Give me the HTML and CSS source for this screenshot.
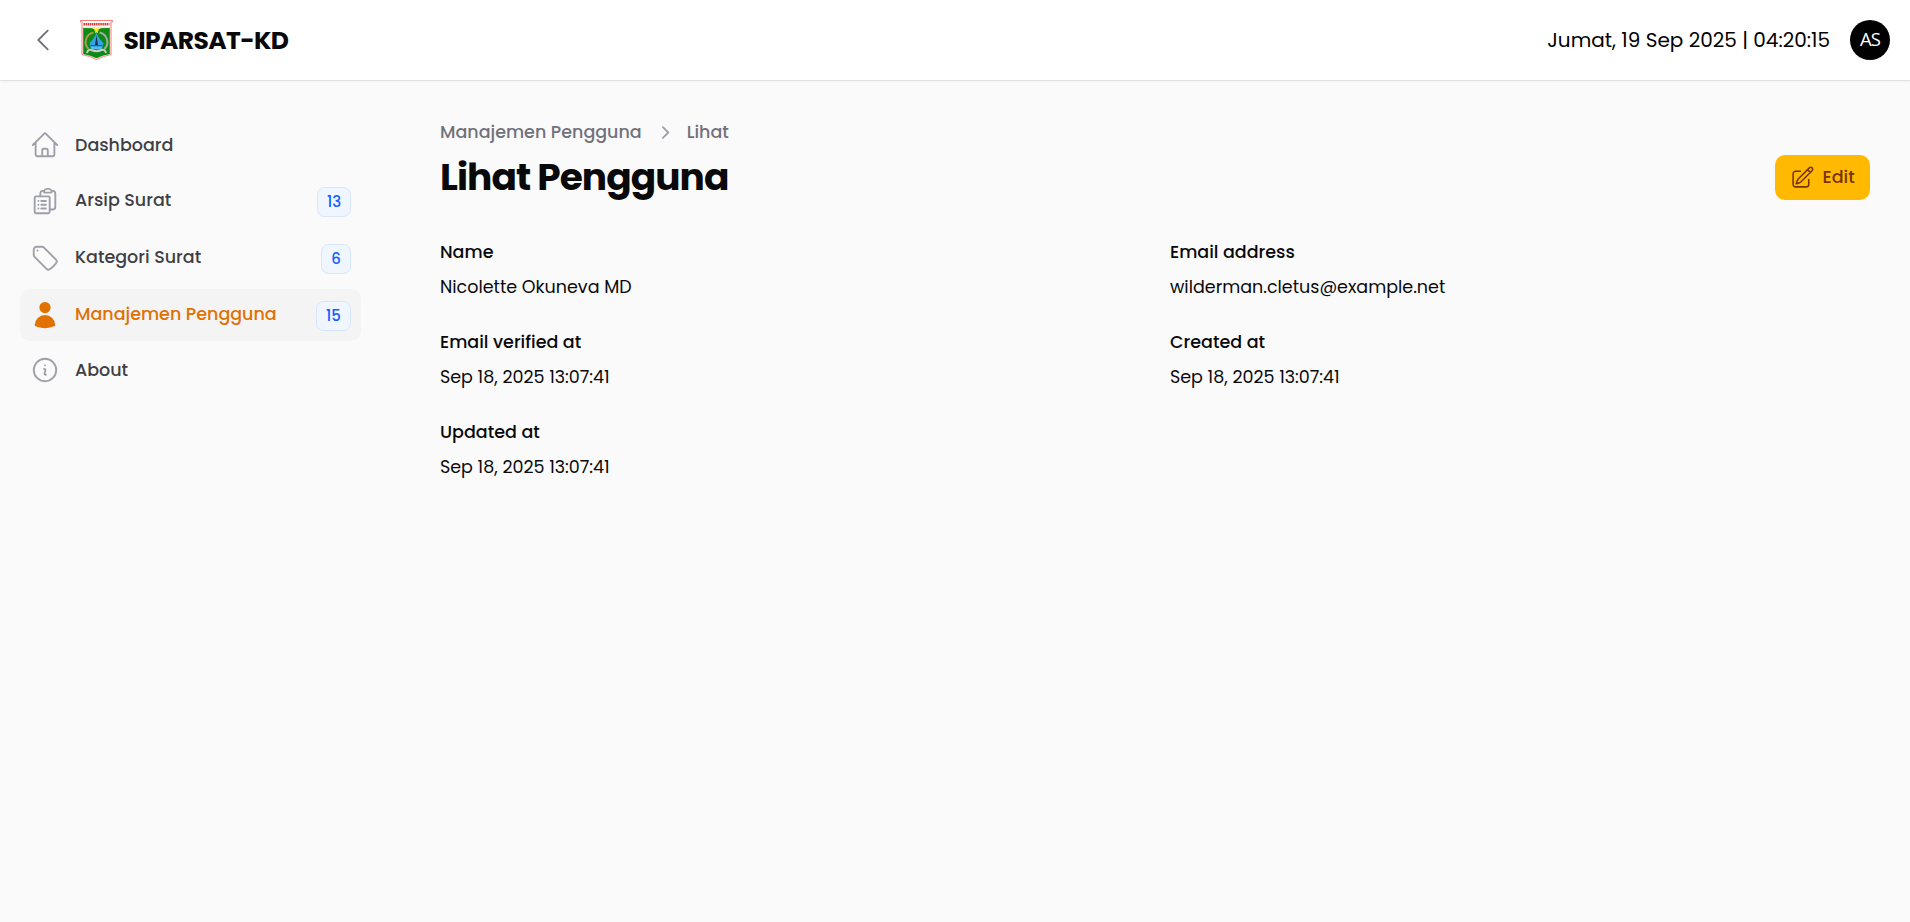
FILE: index.html
```html
<!DOCTYPE html>
<html lang="id">
<head>
<meta charset="utf-8">
<title>Lihat Pengguna - SIPARSAT-KD</title>
<link rel="stylesheet" href="styles.css">
</head>
<body>
<header class="topbar">
  <button class="collapse" aria-label="Tutup menu"><svg class="icon" viewBox="0 0 24 24"><path d="M15.750 19.500 8.250 12l7.500-7.500"/></svg></button>
  <svg class="logo" viewBox="0 0 33 40">
    <path d="M.5.5h32v1.500H31v32.500q-8 1.500-14.500 5-6.500-3.500-14.500-5V2H.5z" fill="#fff" stroke="#f47a74"/>
    <path d="M3.200 7.500h26.600v26.500q-7.500 1.200-13.300 4.300Q10.500 35.200 3.200 34z" fill="#0b8a16"/>
    <path d="M3.200 7h26.600v1l-9 .3-4.300 2.400-4.300-2.400-9-.3z" fill="#ffef7a"/>
    <path d="M3.500 4.200h26" stroke="#e8312b" stroke-width="2.600" stroke-dasharray="1.500 .6" fill="none"/>
    <path d="M13.500 12.500a9.800 9.800 0 0 0-5 16.500" fill="none" stroke="#a89c4a" stroke-width="2"/>
    <path d="M19.500 12.500a9.800 9.800 0 0 1 5 16.500" fill="none" stroke="#a9a9a0" stroke-width="2"/>
    <path d="M16.500 12q-1.500 6-6.800 11 0 4.500 3 6.500h7.600q3-2 3-6.500-5.300-5-6.800-11z" fill="#35a3e4"/>
    <path d="m16.500 15-1.500 10h3z" fill="#17354f"/>
    <path d="M10.500 25.500h12" stroke="#1c5f9c" stroke-width="1"/>
    <path d="M11 28h11" stroke="#9bd6f5" stroke-width=".8"/>
    <path d="M7 33q1-4 4.500-3 5 2.300 10 0 3.500-1 4.500 3" fill="none" stroke="#c9cfc9" stroke-width="2"/>
    <path d="m16.500 8.500.7 1.700h1.900l-1.500 1.200.6 1.900-1.700-1.100-1.700 1.100.6-1.900-1.500-1.200h1.900z" fill="#fff200"/>
  </svg>
  <span class="brand">SIPARSAT-KD</span>
  <span class="clock">Jumat, 19 Sep 2025 | 04:20:15</span>
  <span class="avatar">AS</span>
</header>
<div class="layout">
  <nav class="sidebar">
    <a class="item"><svg class="icon" viewBox="0 0 24 24"><path d="m2.250 12 8.954-8.955c.44-.439 1.152-.439 1.591 0L21.750 12M4.500 9.750v10.125c0 .621.504 1.125 1.125 1.125H9.750v-4.875c0-.621.504-1.125 1.125-1.125h2.250c.621 0 1.125.504 1.125 1.125V21h4.125c.621 0 1.125-.504 1.125-1.125V9.750M8.250 21h8.250"/></svg><span class="label">Dashboard</span></a>
    <a class="item badged"><svg class="icon" viewBox="0 0 24 24"><path d="M9 12h3.750M9 15h3.750M9 18h3.750m3 .75H18a2.250 2.250 0 0 0 2.250-2.250V6.108c0-1.135-.845-2.098-1.976-2.192a48.424 48.424 0 0 0-1.123-.08m-5.801 0c-.065.21-.1.433-.1.664 0 .414.336.75.75.75h4.500a.75.75 0 0 0 .75-.75 2.250 2.250 0 0 0-.1-.664m-5.800 0A2.251 2.251 0 0 1 13.500 2.250H15c1.012 0 1.867.668 2.150 1.586m-5.800 0c-.376.023-.75.05-1.124.08C9.095 4.010 8.250 4.973 8.250 6.108V8.250m0 0H4.875c-.621 0-1.125.504-1.125 1.125v11.250c0 .621.504 1.125 1.125 1.125h9.750c.621 0 1.125-.504 1.125-1.125V9.375c0-.621-.504-1.125-1.125-1.125H8.250ZM6.750 12h.008v.008H6.750V12Zm0 3h.008v.008H6.750V15Zm0 3h.008v.008H6.750V18Z"/></svg><span class="label">Arsip Surat</span><span class="badge b-arsip">13</span></a>
    <a class="item badged"><svg class="icon" viewBox="0 0 24 24"><path d="M9.568 3H5.250A2.250 2.250 0 0 0 3 5.250v4.318c0 .597.237 1.170.659 1.591l9.581 9.581c.699.699 1.780.872 2.607.33a18.095 18.095 0 0 0 5.223-5.223c.542-.827.369-1.908-.33-2.607L11.160 3.660A2.250 2.250 0 0 0 9.568 3ZM6 6h.008v.008H6V6Z"/></svg><span class="label">Kategori Surat</span><span class="badge b-kategori">6</span></a>
    <a class="item badged active"><svg class="icon solid" viewBox="0 0 24 24"><path d="M7.500 6a4.500 4.500 0 1 1 9 0 4.500 4.500 0 0 1-9 0ZM3.751 20.105a8.250 8.250 0 0 1 16.498 0 .75.75 0 0 1-.437.695A18.683 18.683 0 0 1 12 22.500c-2.786 0-5.433-.608-7.812-1.700a.75.75 0 0 1-.437-.695Z"/></svg><span class="label">Manajemen Pengguna</span><span class="badge b-pengguna">15</span></a>
    <a class="item"><svg class="icon" viewBox="0 0 24 24"><path d="m11.250 11.250.041-.02a.75.75 0 0 1 1.063.852l-.708 2.836a.75.75 0 0 0 1.063.853l.041-.021M21 12a9 9 0 1 1-18 0 9 9 0 0 1 18 0Zm-9-3.750h.008v.008H12V8.250Z"/></svg><span class="label">About</span></a>
  </nav>
  <main class="main">
    <div class="crumbs"><span>Manajemen Pengguna</span><svg class="crumb-sep" viewBox="0 0 20 20"><path d="M8.220 5.220a.75.75 0 0 1 1.060 0l4.250 4.250a.75.75 0 0 1 0 1.060l-4.250 4.250a.75.75 0 0 1-1.060-1.060L11.940 10 8.220 6.280a.75.75 0 0 1 0-1.060Z"/></svg><span>Lihat</span></div>
    <div class="heading">
      <h1 class="title">Lihat Pengguna</h1>
      <button class="edit"><svg class="edit-icon" viewBox="0 0 24 24"><path d="m16.862 4.487 1.687-1.688a1.875 1.875 0 1 1 2.652 2.652L10.582 16.070a4.500 4.500 0 0 1-1.897 1.130L6 18l.8-2.685a4.500 4.500 0 0 1 1.130-1.897l8.932-8.931Zm0 0L19.500 7.125M18 14v4.750A2.250 2.250 0 0 1 15.750 21H5.250A2.250 2.250 0 0 1 3 18.750V8.250A2.250 2.250 0 0 1 5.250 6H10"/></svg><span>Edit</span></button>
    </div>
    <dl class="details">
      <div class="entry"><dt>Name</dt><dd>Nicolette Okuneva MD</dd></div>
      <div class="entry"><dt>Email address</dt><dd>wilderman.cletus@example.net</dd></div>
      <div class="entry"><dt>Email verified at</dt><dd>Sep 18, 2025 13:07:41</dd></div>
      <div class="entry"><dt>Created at</dt><dd>Sep 18, 2025 13:07:41</dd></div>
      <div class="entry"><dt>Updated at</dt><dd>Sep 18, 2025 13:07:41</dd></div>
    </dl>
  </main>
</div>
</body>
</html>
```
FILE: styles.css
```css
* { box-sizing: border-box; margin: 0; padding: 0; }
body {
  min-height: 100vh;
  background: #fafafa;
  color: #09090b;
  font: 400 17.5px/25px Poppins, Inter, "Open Sans", sans-serif;
}
button { border: 0; background: none; font: inherit; color: inherit; }

.topbar {
  display: flex;
  align-items: center;
  height: 80px;
  padding: 0 20px 0 28px;
  background: #fff;
  box-shadow: 0 0 0 1px rgba(9, 9, 11, .05), 0 1px 3px rgba(0, 0, 0, .07);
}
.icon { flex: none; width: 30px; height: 30px; fill: none; stroke: #9f9fa9; stroke-width: 1.5; stroke-linecap: round; stroke-linejoin: round; }
.collapse { display: flex; }
.collapse .icon { stroke: #71717b; }
.logo { width: 33px; height: 40px; margin-left: 22px; }
.brand { margin-left: 10.5px; font-size: 25px; font-weight: 700; letter-spacing: -.025em; white-space: nowrap; }
.clock { margin-left: auto; font-size: 20px; color: #000; white-space: nowrap; }
.avatar {
  display: flex; align-items: center; justify-content: center;
  width: 40px; height: 40px; margin-left: 20px; padding-bottom: 1px;
  border-radius: 50%; background: #000; color: #fff;
  font: 400 18.5px/1 "Open Sans", sans-serif; letter-spacing: -.8px;
}

.layout { display: flex; }
.sidebar { display: flex; flex-direction: column; gap: 5px; width: 400px; padding: 40px 39px 0 20px; }
.item { display: flex; align-items: center; gap: 15px; height: 50px; padding: 0 10px; border-radius: 10px; }
.item:last-child { margin-top: -.6px; }
.badged { height: 52px; }
.label { flex: 1; color: #3f3f46; font-weight: 500; white-space: nowrap; }
.badged .label { padding-bottom: 2px; }
.active { background: #f4f4f5; }
.active .label { color: #e17100; }
.solid { fill: #e17100; stroke: none; }
.badge {
  height: 30px; margin-top: 2px; border: 1px solid #d6e6ff; border-radius: 7.5px;
  background: #eff6ff; color: #155dfc; font-size: 15px; font-weight: 500; line-height: 28px; text-align: center;
}
.b-arsip { width: 34px; }
.b-kategori { width: 30px; }
.b-pengguna { width: 35px; }

.main { flex: 1; padding: 40px 40px 0; }
.crumbs { display: flex; align-items: center; gap: 10px; color: #71717b; font-weight: 500; }
.crumb-sep { width: 25px; height: 25px; fill: #9f9fa9; }
.heading { display: flex; justify-content: space-between; align-items: center; height: 45px; margin-top: 10px; }
.title { font-size: 37.5px; line-height: 45px; font-weight: 700; letter-spacing: -.025em; }
.edit { display: flex; align-items: center; gap: 7.5px; width: 95px; height: 45px; padding: 0 15px; border-radius: 10px; background: #ffb900; color: #7b3306; font-weight: 500; }
.edit-icon { flex: none; width: 25px; height: 25px; fill: none; stroke: currentColor; stroke-width: 1.5; stroke-linecap: round; stroke-linejoin: round; }
.details { display: grid; grid-template-columns: 1fr 1fr; gap: 30px; margin-top: 40px; }
.entry { display: flex; flex-direction: column; align-items: flex-start; gap: 10px; }
dt { font-weight: 500; }
```
